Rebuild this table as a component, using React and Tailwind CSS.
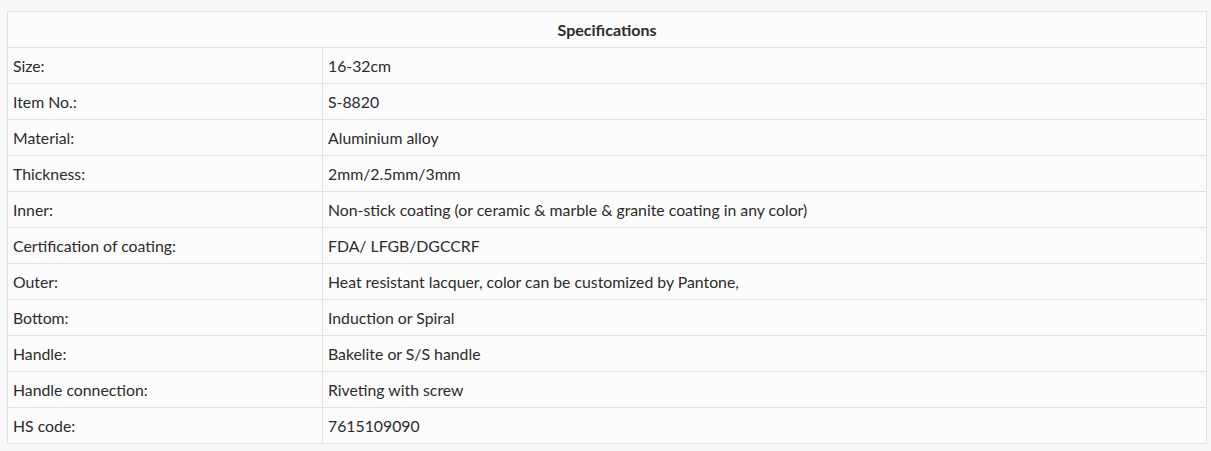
import React from "react";

const rows = [
  ["Size:", "16-32cm"],
  ["Item No.:", "S-8820"],
  ["Material:", "Aluminium alloy"],
  ["Thickness:", "2mm/2.5mm/3mm"],
  ["Inner:", "Non-stick coating (or ceramic & marble & granite coating in any color)"],
  ["Certification of coating:", "FDA/ LFGB/DGCCRF"],
  ["Outer:", "Heat resistant lacquer, color can be customized by Pantone,"],
  ["Bottom:", "Induction or Spiral"],
  ["Handle:", "Bakelite or S/S handle"],
  ["Handle connection:", "Riveting with screw"],
  ["HS code:", "7615109090"],
];

export default function App() {
  return (
    <div className="min-h-[451px] w-[1211px] bg-[#f8f8f8] pl-[7px] pt-[11px]" style={{ fontFamily: "Lato, 'Open Sans', sans-serif" }}>
      <table className="w-[1200px] border-collapse bg-[#fcfcfc] text-[15.8px] leading-[20px] text-[#2b2b2b]">
        <tbody>
          <tr className="h-[36px]">
            <td colSpan={2} className="border border-[#e2e2e2] text-center text-[16px] font-bold">Specifications</td>
          </tr>
          {rows.map(([k, v]) => (
            <tr key={k} className="h-[36px]">
              <td className="w-[315px] border border-[#e2e2e2] px-[5px]">{k}</td>
              <td className="border border-[#e2e2e2] px-[5px]">{v}</td>
            </tr>
          ))}
        </tbody>
      </table>
    </div>
  );
}
